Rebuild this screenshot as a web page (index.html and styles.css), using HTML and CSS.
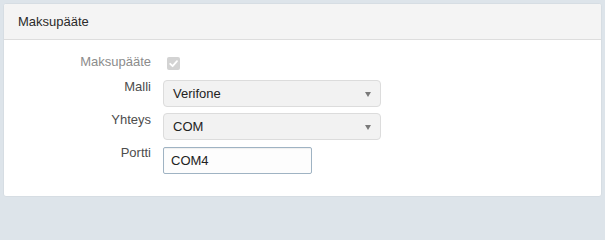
FILE: index.html
```html
<!DOCTYPE html>
<html lang="fi">
<head>
<meta charset="utf-8">
<title>Maksupääte</title>
<link rel="stylesheet" href="styles.css">
</head>
<body>
<div class="panel">
  <div class="panel-heading">Maksupääte</div>
  <div class="panel-body">
    <div class="form-grid">
      <label class="lbl disabled">Maksupääte</label>
      <div class="ctl ctl-check">
        <span class="checkbox">
          <svg viewBox="0 0 13 13" width="13" height="13"><path d="M3.2 6.8 L5.6 9.2 L10 4.2" fill="none" stroke="#fff" stroke-width="1.8" stroke-linecap="round" stroke-linejoin="round"/></svg>
        </span>
      </div>

      <label class="lbl">Malli</label>
      <div class="ctl">
        <div class="select">
          <span>Verifone</span>
          <span class="caret"></span>
        </div>
      </div>

      <label class="lbl">Yhteys</label>
      <div class="ctl">
        <div class="select">
          <span>COM</span>
          <span class="caret"></span>
        </div>
      </div>

      <label class="lbl">Portti</label>
      <div class="ctl">
        <input class="input" type="text" value="COM4">
      </div>
    </div>
  </div>
</div>
</body>
</html>
```
FILE: styles.css
```css
html, body {
  margin: 0;
  padding: 0;
}
html {
  background: #dde4ea;
}
body {
  padding: 3px;
  font-family: "Liberation Sans", Arial, sans-serif;
  font-size: 13px;
  color: #333;
  width: 599px;
}
.panel {
  background: #fff;
  border: 1px solid #d6dde3;
  border-radius: 3px;
  height: 192px;
  overflow: hidden;
}
.panel-heading {
  background: #f4f4f4;
  border-bottom: 1px solid #dddddd;
  height: 35px;
  line-height: 35px;
  padding-left: 14px;
  font-size: 13px;
  color: #2b2b2b;
}
.panel-body {
  padding-top: 15px;
}
.form-grid {
  display: grid;
  grid-template-columns: 147px auto;
  column-gap: 12px;
  row-gap: 6px;
  align-items: start;
}
.lbl {
  text-align: right;
  line-height: 14px;
  font-size: 13px;
  color: #4d4d4d;
}
.lbl.disabled {
  color: #8c8c8c;
}
.ctl-check {
  height: 19px;
}
.checkbox {
  display: block;
  width: 13px;
  height: 13px;
  margin-top: 2px;
  margin-left: 4px;
  background: #d3d3d3;
  border-radius: 2px;
}
.checkbox svg {
  display: block;
}
.select {
  box-sizing: border-box;
  width: 218px;
  height: 27px;
  border: 1px solid #dcdcdc;
  border-radius: 4px;
  background: #f2f2f2;
  display: flex;
  align-items: center;
  justify-content: space-between;
  padding: 0 9px 0 9px;
  font-size: 13px;
  color: #222;
}
.caret {
  width: 0;
  height: 0;
  border-left: 3.5px solid transparent;
  border-right: 3.5px solid transparent;
  border-top: 5px solid #7a7a7a;
  margin-top: 1px;
}
.input {
  box-sizing: border-box;
  display: block;
  width: 149px;
  height: 27px;
  margin: 1px 0 0 0;
  border: 1px solid #9fb3c3;
  border-radius: 2px;
  padding: 0 7px;
  background: #fdfdfd;
  box-shadow: inset 0 1px 1px rgba(0,0,0,0.06);
  font-family: "Liberation Sans", Arial, sans-serif;
  font-size: 13px;
  color: #222;
  outline: none;
}
```
